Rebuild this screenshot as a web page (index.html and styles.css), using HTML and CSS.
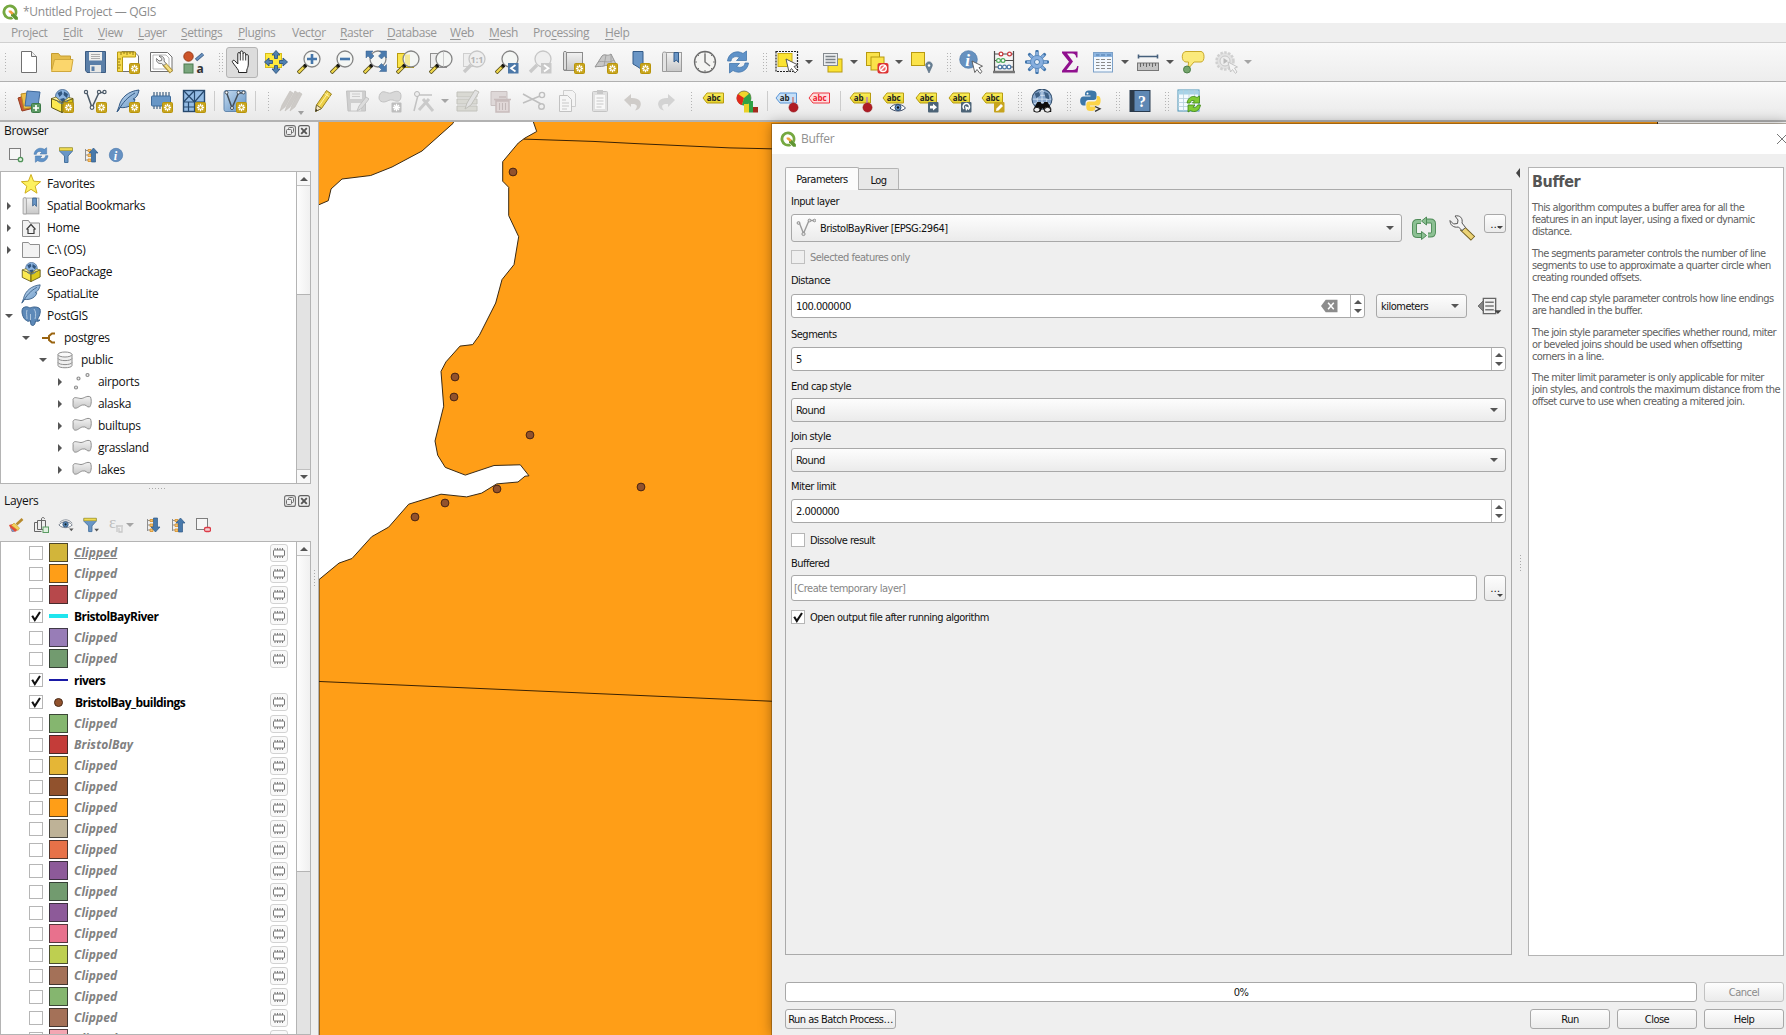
FILE: index.html
```html
<!DOCTYPE html>
<html lang="en">
<head>
<meta charset="utf-8">
<title>*Untitled Project — QGIS</title>
<link rel="stylesheet" href="styles.css">
</head>
<body>
<svg class="defs" aria-hidden="true">
<defs>
<linearGradient id="gGrey" x1="0" y1="0" x2="0" y2="1"><stop offset="0" stop-color="#f2f2f2"/><stop offset="1" stop-color="#c8c8c8"/></linearGradient>
<linearGradient id="gBlue" x1="0" y1="0" x2="1" y2="1"><stop offset="0" stop-color="#c5dbf0"/><stop offset="1" stop-color="#5f90c2"/></linearGradient>
<linearGradient id="gYel" x1="0" y1="0" x2="0" y2="1"><stop offset="0" stop-color="#fcf05c"/><stop offset="1" stop-color="#e3cf2c"/></linearGradient>

<symbol id="qgis" viewBox="0 0 16 16"><path d="M8 .5a7.5 7.5 0 1 0 3.4 14.2L9.3 12.6A4.7 4.7 0 1 1 12.4 9.8l2 2A7.5 7.5 0 0 0 8 .5z" fill="#75a840"/><path d="M9 8.8h2.6l4.3 4.4v2.5h-2.7L9 11.4z" fill="#5f9632"/><path d="M6.6 6.6h2.6l2.2 2.2v1l-1 .8h-.8L6.6 8z" fill="#f0a03c"/></symbol>

<g id="nw"><rect x="13.5" y="13.5" width="10" height="10" rx="1" fill="#c8a51e" stroke="#b8940a"/><path d="M18.5 14.8v7.4M14.9 18.5h7.2M16 16l5 5M21 16l-5 5" stroke="#fff" stroke-width="1.3"/><circle cx="18.5" cy="18.5" r="1.2" fill="#c8a51e"/></g>
<g id="nwg"><rect x="13.5" y="13.5" width="10" height="10" rx="1" fill="#bdbdbd"/><path d="M18.5 14.8v7.4M14.9 18.5h7.2M16 16l5 5M21 16l-5 5" stroke="#fff" stroke-width="1.3"/></g>

<symbol id="new" viewBox="0 0 24 24"><path d="M4.5 1.500h10l5 5v16h-15z" fill="#fff" stroke="#707070"/><path d="M14.500 1.500v5h5" fill="#eee" stroke="#707070"/></symbol>
<symbol id="open" viewBox="0 0 24 24"><path d="M1.500 19.500v-16h7l2 2.500h10v13.500z" fill="#e5bd4c" stroke="#c49c30"/><path d="M1.500 21.500l3-12h18.500l-2 12z" fill="#fbd66c" stroke="#d0a83c"/></symbol>
<symbol id="save" viewBox="0 0 24 24"><path d="M2.500 1.500h20v21H4l-1.500-2z" fill="#5b7fa8" stroke="#3c5c82"/><rect x="6" y="2" width="13" height="8.500" fill="#f0f0ee"/><path d="M8 4.500h9M8 6.500h9M8 8.500h9" stroke="#9a9a9a" stroke-width=".8"/><rect x="7" y="15" width="11" height="7.500" fill="#e8e8e6"/><rect x="8.500" y="16.500" width="3" height="4.500" fill="#5b7fa8"/></symbol>
<symbol id="layout" viewBox="0 0 24 24"><path d="M6 1.500h12l4.500 4.500v15.500H6z" fill="#fff" stroke="#707070"/><path d="M1.500 2h18v5H6.500v14.500h-5z" fill="#f5d94e" stroke="#b89a10"/><path d="M5 2v3M8 2v2M11 2v3M14 2v2M17 2v3M2 9h3M2 12h2M2 15h3M2 18h2" stroke="#8a7010" stroke-width=".9"/><use href="#nw"/></symbol>
<symbol id="layman" viewBox="0 0 24 24"><path d="M1.500 2.500h17l4.500 4.500v14.500h-21.500z" fill="#fff" stroke="#707070"/><path d="M4 5h13l3 3v11H4z" fill="none" stroke="#a9a9a9" stroke-width=".8"/><path d="M15 14l7.500 8" stroke="#ad9038" stroke-width="4.500"/><path d="M15.500 14l6.500 7.300" stroke="#f5e083" stroke-width="2.500"/><path d="M10 6l3 2.500-.5 2-2.500.5L7.500 8.500c-.5 3 1.500 5.500 5 5l2.500 2 2-2-2-2.500c1-3-1.500-5.500-5-5z" fill="#f0f0f0" stroke="#666" stroke-width=".9"/></symbol>
<symbol id="style" viewBox="0 0 24 24"><circle cx="6.500" cy="6.500" r="4.700" fill="#cc5429" stroke="#9b3a16"/><path d="M14 10l7-6" stroke="#3f6088" stroke-width="3.500"/><path d="M14.500 9.500l6.500-5.500" stroke="#6a92bf" stroke-width="1.800"/><rect x="2" y="14" width="9" height="9" fill="#7aa67d" stroke="#4b7a4f"/><text x="14.500" y="22.500" font-size="12" fill="#333">a</text></symbol>
<symbol id="hand" viewBox="0 0 24 24"><path d="M8.500 22.500v-2C7 18 4 14.500 2.500 12.200c-.8-1.300 1-2.600 2.200-1.500L7.800 14V3.800c0-1.800 2.300-1.800 2.500 0V2.200c.2-1.700 2.500-1.700 2.700 0v1.600c.3-1.600 2.500-1.500 2.700 0v1.700c.4-1.400 2.500-1.300 2.600.3V14c0 3-1 4-1.500 6v2.500z" fill="#fff" stroke="#222"/><path d="M10.300 4v6.500M13 4v6.500M15.700 5.500v5" stroke="#222" stroke-width=".9"/></symbol>
<symbol id="pan" viewBox="0 0 24 24"><rect x="1.500" y="3.500" width="16" height="14" fill="#ffe93c" stroke="#d7bd1c"/><path d="M12 .5l4 4.500h-2.500v3.500h-3V5H8zM12 23.500l4-4.500h-2.500v-3.500h-3V19H8zM.5 12L5 8v2.500h3.500v3H5V16zM23.500 12L19 8v2.500h-3.500v3H19V16z" fill="#5080b0" stroke="#30557f" stroke-width=".9"/></symbol>
<g id="lens"><path d="M9 15l-8 8" stroke="#58501c" stroke-width="3.800"/><path d="M6.500 17.500L1.500 22.500" stroke="#f0d84c" stroke-width="2.300"/><path d="M9.800 14.200l-2.300 2.300" stroke="#111" stroke-width="3.300"/><circle cx="15" cy="9" r="8" fill="#f4f6f4" stroke="#858585" stroke-width="1.300"/></g>
<g id="lensg"><path d="M9 15l-7 7" stroke="#c9c9c9" stroke-width="3.300"/><circle cx="15" cy="9" r="8" fill="#efefef" stroke="#c6c6c6" stroke-width="1.300"/></g>
<symbol id="zin" viewBox="0 0 24 24"><use href="#lens"/><path d="M15 4v10M10 9h10" stroke="#4576aa" stroke-width="2.600"/></symbol>
<symbol id="zout" viewBox="0 0 24 24"><use href="#lens"/><path d="M10 9h10" stroke="#4576aa" stroke-width="2.600"/></symbol>
<symbol id="zfull" viewBox="0 0 24 24"><use href="#lens"/><path d="M3 1h7L8 3l3 3-3 3-3-3-2 2zM23.500 1h-7l2 2-3 3 3 3 3-3 2 2zM23.500 21.500h-7l2-2-3-3 3-3 3 3 2-2z" fill="#4b7bae" stroke="#345f8d" stroke-width=".5"/></symbol>
<symbol id="zsel" viewBox="0 0 24 24"><rect x="1.500" y="3.500" width="16" height="14" fill="#fbe44a" stroke="#b99c10"/><use href="#lens"/><path d="M9 4.500h5v11.500a8 8 0 0 1-5-3.500z" fill="#f3e99a"/></symbol>
<symbol id="zlay" viewBox="0 0 24 24"><rect x="1.500" y="3.500" width="16" height="14" fill="#eee" stroke="#8f8f8f"/><use href="#lens"/><path d="M14.500 1.500v15" stroke="#ccc"/></symbol>
<symbol id="z11" viewBox="0 0 24 24"><rect x="1.500" y="3.500" width="16" height="13" fill="#eee" stroke="#cfcfcf"/><use href="#lensg"/><text x="8.500" y="12.500" font-size="9" font-weight="bold" fill="#b5b5b5">1:1</text></symbol>
<symbol id="zlast" viewBox="0 0 24 24"><use href="#lens"/><rect x="13" y="13" width="10.500" height="10.500" fill="#4c78a8"/><path d="M20.500 15l-4.500 3.200 4.500 3.300" fill="none" stroke="#fff" stroke-width="1.800"/></symbol>
<symbol id="znext" viewBox="0 0 24 24"><use href="#lensg"/><rect x="13" y="13" width="10.500" height="10.500" fill="#c9c9c9"/><path d="M16 15l4.500 3.200-4.500 3.300" fill="none" stroke="#fff" stroke-width="1.800"/></symbol>
<symbol id="mapnew" viewBox="0 0 24 24"><rect x="3.500" y="2.500" width="18" height="18" fill="url(#gGrey)" stroke="#8b8b8b"/><path d="M2.500 2.500c0-1.500 3-1.500 3 0V20h-3z" fill="#ddd" stroke="#8b8b8b"/><use href="#nw"/></symbol>
<symbol id="map3d" viewBox="0 0 24 24"><path d="M1 17L8 6c3-3 5 1 9-2l5 10c-3 3-8 0-12 2-4 1-6 0-9 1z" fill="#c7c7c7" stroke="#959595"/><path d="M4 12c5-2 10 2 16-2M12 5l-2 11M17 4l0 11" stroke="#999" fill="none" stroke-width=".8"/><use href="#nw"/></symbol>
<symbol id="bmnew" viewBox="0 0 24 24"><path d="M6 1.500h10v19l-5-3.500-5-3z" fill="#6a96c6" stroke="#335b88"/><use href="#nw"/></symbol>
<symbol id="bm" viewBox="0 0 24 24"><rect x="3.500" y="2.500" width="18" height="19" fill="url(#gGrey)" stroke="#9b9b9b"/><path d="M2.500 3.500c0-2 4-2 4 0v18h-4z" fill="#e2e2e2" stroke="#9b9b9b"/><path d="M14 2.500h4.500v10l-2.200-2.500-2.300 2z" fill="#6a96c6" stroke="#335b88"/></symbol>
<symbol id="clock" viewBox="0 0 24 24"><circle cx="12" cy="12" r="10.500" fill="#f4f4f2" stroke="#6c6c6c" stroke-width="1.300"/><path d="M12 4v8l5 4" fill="none" stroke="#777" stroke-width="1.500"/><path d="M12 2v2M12 20v2M2 12h2M20 12h2M5 5l1 1M19 5l-1 1M5 19l1-1M19 19l-1-1" stroke="#777"/></symbol>
<symbol id="refresh" viewBox="0 0 24 24"><path d="M1.500 11c1-8 9-11.500 15.500-7.500L20.500 1v9.500h-10L13.500 7.500c-4-2-8-.5-8.500 3.500z" fill="#5f92c8" stroke="#4577ac" stroke-width=".8"/><path d="M22.500 13c-1 8-9 11.500-15.500 7.500L3.500 23v-9.500h10L10.500 16.500c4 2 8 .5 8.500-3.500z" fill="#5f92c8" stroke="#4577ac" stroke-width=".8"/></symbol>
<symbol id="select" viewBox="0 0 24 24"><rect x="1" y="1.500" width="21.500" height="20" fill="none" stroke="#222" stroke-width="1.200" stroke-dasharray="2 1"/><rect x="3" y="3.500" width="14" height="13" fill="#fbe332" stroke="#c8ac14"/><path d="M11 9l3 13 2.500-3.500L20 23l2.500-2.500-3.500-4 4-1.500z" fill="#fff" stroke="#555"/></symbol>
<symbol id="selform" viewBox="0 0 24 24"><rect x="8" y="9" width="14" height="13" fill="#fbe332" stroke="#b89a10"/><rect x="3.500" y="3.500" width="14" height="12" fill="#eceef0" stroke="#868b90"/><path d="M5.500 6.500h10M5.500 9.500h10M5.500 12.500h10" stroke="#7b8288" stroke-width="1.500"/></symbol>
<symbol id="desel" viewBox="0 0 24 24"><rect x="1.500" y="2.500" width="13" height="13" fill="#fbe34a" stroke="#b89a10"/><rect x="6" y="7" width="13" height="13" fill="#fbe34a" stroke="#b89a10"/><rect x="12.500" y="13" width="11" height="10.500" rx="2" fill="#d33" /><circle cx="18" cy="18.200" r="3.300" fill="#e66" stroke="#fff" stroke-width="1.400"/><path d="M15.500 20.500l5-5" stroke="#fff" stroke-width="1.400"/></symbol>
<symbol id="selloc" viewBox="0 0 24 24"><rect x="1.500" y="2.500" width="13" height="13" fill="#fbe34a" stroke="#b89a10"/><path d="M19 23l-3-6.500a3.300 3.300 0 1 1 6 0z" fill="#6a8296" stroke="#4f6578" stroke-width=".6"/><circle cx="19" cy="15.500" r="1.200" fill="#fff"/></symbol>
<symbol id="info" viewBox="0 0 24 24"><circle cx="9.500" cy="9.500" r="8.800" fill="#6691bf" stroke="#4a78aa" stroke-width=".7"/><text class="serif" x="6.200" y="15.500" font-size="17" font-weight="bold" font-style="italic" fill="#fff">i</text><path d="M13 11l2.800 11.500 2.200-3 3 4 2-1.800-3-4 3.500-1.500z" fill="#fff" stroke="#555" stroke-width=".9"/></symbol>
<symbol id="abacus" viewBox="0 0 24 24"><path d="M2.500 1v21M21.500 1v21M2.500 4h19M2.500 10.500h19M2.500 17h19" stroke="#4d4d4d" stroke-width="1.200"/><path d="M1 22h22" stroke="#777" stroke-width="2.500"/><g fill="#fff" stroke-width="1.200"><g stroke="#c8383c"><circle cx="9" cy="4" r="1.900"/><circle cx="17.500" cy="4" r="1.900"/></g><g stroke="#4ea95a"><circle cx="6.500" cy="10.500" r="1.900"/><circle cx="11" cy="10.500" r="1.900"/></g><g stroke="#4b76a5"><circle cx="8" cy="17" r="1.900"/><circle cx="12.500" cy="17" r="1.900"/><circle cx="17" cy="17" r="1.900"/></g></g></symbol>
<symbol id="gear" viewBox="0 0 24 24"><path d="M12 1.500v21M1.500 12h21M4.600 4.600l14.800 14.800M19.400 4.600L4.600 19.400" stroke="#4276ac" stroke-width="3.400" stroke-linecap="round"/><path d="M12 2v20M2 12h20M5 5l14 14M19 5L5 19" stroke="#86aede" stroke-width="2.200"/><circle cx="12" cy="12" r="6.500" fill="#86aede" stroke="#5a8bc0"/><circle cx="12" cy="12" r="2.500" fill="#e8f0f8" stroke="#4a7db3"/></symbol>
<symbol id="sigma" viewBox="0 0 24 24"><path d="M4 1.500h15.500v6h-1.300c-.5-3-1.500-4-4.200-4H9l6 8-6.500 8.500h6c2.700 0 4-1 4.800-4h1.200l-1 6.500H4v-1.800l7-9-7-8.700z" fill="#90108e"/></symbol>
<symbol id="table" viewBox="0 0 24 24"><rect x="2.500" y="2.500" width="19" height="19.500" fill="#f2f8fe" stroke="#7ba0c8"/><rect x="3" y="3" width="18" height="4" fill="#8db5e0"/><path d="M5 9.500h3.500M10 9.500h4M16 9.500h4M5 12.500h3.500M10 12.500h4M16 12.500h4M5 15.500h3.500M10 15.500h4M16 15.500h4M5 18.500h3.500M10 18.500h4M16 18.500h4" stroke="#8a8a8a" stroke-width="1.200"/><path d="M5 5h3.500M10 5h4M16 5h4" stroke="#4a78aa"/></symbol>
<symbol id="measure" viewBox="0 0 24 24"><path d="M2.500 6.500h19M2.500 4.500v4M21.500 4.500v4" stroke="#46607c" stroke-width="1.600"/><rect x="1.500" y="13" width="21" height="7.500" fill="#c4c4c4" stroke="#777"/><path d="M4.500 13v4M7.500 13v3M10.500 13v4M13.500 13v3M16.500 13v4M19.500 13v3" stroke="#666"/></symbol>
<symbol id="tips" viewBox="0 0 24 24"><path d="M5 1.500h15c4 0 4 10.500 0 10.500h-7l-6 7 .5-7H5c-5 0-5-10.500 0-10.500z" fill="#fbea7c" stroke="#c8a92a"/><circle cx="6" cy="19.500" r="3.500" fill="#75a56c" stroke="#4b7d46"/></symbol>
<symbol id="run" viewBox="0 0 24 24"><circle cx="11" cy="11" r="8.500" fill="#e2e2e2" stroke="#d0d0d0" stroke-width="2.500" stroke-dasharray="2.500 1.400"/><circle cx="11" cy="11" r="5" fill="#eee" stroke="#c8c8c8"/><path d="M9.500 8l4.500 3-4.500 3z" fill="#bbb"/><path d="M14 12l2.500 10 2-2.500 3 4 1.500-1.500-2.500-4 3-1z" fill="#f4f4f4" stroke="#c4c4c4"/></symbol>

<symbol id="srcman" viewBox="0 0 24 24"><path d="M1 9l12-4 4 14L5 22z" fill="#c95a38" stroke="#963c1e"/><path d="M4 5l12-2 2 15-11 2z" fill="#eec04a" stroke="#b88a20"/><path d="M10 2l13 1-2 14H8z" fill="#6c98cc" stroke="#3f6a9c"/><rect x="14.500" y="14.500" width="9" height="9" rx="1" fill="#5c9a64" stroke="#3c7a46"/><path d="M19 16v6M16 19h6" stroke="#fff" stroke-width="1.700"/></symbol>
<g id="boxg"><path d="M1.500 9.500L12 13.500v10l-10.500-5z" fill="#fce94f" stroke="#5a5210"/><path d="M12 13.500l11-4V18l-11 5.500z" fill="#dcc71c" stroke="#5a5210"/><circle cx="12.500" cy="7.500" r="7" fill="#8bb3e0" stroke="#3a5f8c" stroke-width=".8"/><path d="M7.500 4l4-2 1 3-3 3zM14 2.500l4 2.500-1 4-3.500-3zM10 10l4-1 2 3-3 2z" fill="#31567f"/><path d="M1.500 9.500L6 8l6 5.500 6.500-5 4.500 1-11 4z" fill="#fff3a0" stroke="#5a5210" stroke-width=".7"/></g>
<symbol id="gpknew" viewBox="0 0 24 24"><use href="#boxg"/><use href="#nw"/></symbol>
<symbol id="gpk" viewBox="0 0 24 24"><use href="#boxg"/></symbol>
<symbol id="shpnew" viewBox="0 0 24 24"><path d="M3.500 3L9 18.500l7-15h5.500" fill="none" stroke="#4c5a68" stroke-width="1.500"/><g fill="#fff" stroke="#4c5a68" stroke-width="1.200"><circle cx="3" cy="3" r="1.600"/><circle cx="9" cy="18.500" r="1.800"/><circle cx="16" cy="3" r="1.600"/><circle cx="21.500" cy="3" r="1.600"/></g><use href="#nw"/></symbol>
<g id="feath"><path d="M23 1C13 2 5 8 3 17.500L1 23l3-4.500c8 1 14-3 15-8-1 0-1.500 0-2-.5 3-1 5-3.500 6-9z" fill="url(#gBlue)" stroke="#355b86"/><path d="M2 22C7 13 12 8 19 4" fill="none" stroke="#355b86"/></g>
<symbol id="splnew" viewBox="0 0 24 24"><use href="#feath"/><use href="#nw"/></symbol>
<symbol id="spl" viewBox="0 0 24 24"><use href="#feath"/></symbol>
<symbol id="memnew" viewBox="0 0 24 24"><path d="M5 3v17M8 3v17M11 3v17M14 3v17M17 3v17M20 3v17" stroke="#3e5f80" stroke-width="1.200"/><rect x="2.500" y="7" width="19" height="10" rx="1" fill="#6796c6" stroke="#3d6a9a"/><use href="#nw"/></symbol>
<symbol id="vrtnew" viewBox="0 0 24 24"><rect x="1.500" y="1.500" width="21" height="21" fill="#94bce4" stroke="#27496d" stroke-width="1.400"/><path d="M1.500 13h21M12.500 1.500v21M1.500 1.500l11 11.500M12.500 1.500L1.500 13M12.500 13l10-11.500M6.500 13v9.500M1.500 18h11" stroke="#27496d" stroke-width="1.200"/><use href="#nw"/></symbol>
<symbol id="vlay" viewBox="0 0 24 24"><rect x="1" y="1.500" width="22" height="21" rx="2" fill="url(#gBlue)" stroke="#6488ae"/><path d="M3.500 3.500L9 19l6.500-15h5" fill="none" stroke="#444f5a" stroke-width="1.500"/><g fill="#fff" stroke="#444f5a"><circle cx="3.500" cy="3.500" r="1.500"/><circle cx="9" cy="19" r="1.500"/><circle cx="15.500" cy="3.500" r="1.500"/><circle cx="20.500" cy="3.500" r="1.500"/></g><use href="#nw"/></symbol>
<symbol id="pens" viewBox="0 0 24 24"><path d="M1 22l2-6L11 2l3 2-8 14zM6 22l2-6 8-14 3 2-8 14zM11 22l2-6 7-13 3 2-7 13z" fill="#cdcac7" stroke="#c2bfbb" stroke-width=".6"/></symbol>
<symbol id="pencil" viewBox="0 0 24 24"><path d="M3.500 22.500l1-6.500L14.500 1.500l5 3.500-10 14.500z" fill="#eccf48" stroke="#9c8420"/><path d="M12.500 4.300l5 3.500M7 17L16 4" stroke="#fff3a4"/><path d="M3.500 22.500l1-6.500 5 3.500z" fill="#f6e6c0" stroke="#756a3a"/><path d="M3.500 22.500l.5-2.500 1.700 1.200z" fill="#222"/></symbol>
<symbol id="saveg" viewBox="0 0 24 24"><path d="M1.500 2h19v20H3z" fill="#cfcfcf" stroke="#c2c2c2"/><path d="M5 3h12v7H5zM6 14h10v7.500H6z" fill="#eee"/><path d="M7 5h8M7 7.500h8" stroke="#ccc"/><path d="M12 22l2-5 7-9 3 2-7 9z" fill="#dcdcdc" stroke="#c2c2c2"/></symbol>
<symbol id="addg" viewBox="0 0 24 24"><path d="M2 5c3-5 7 0 11-1 6-3 10-2 10 3 0 6-4 6-8 4-4-1-6 2-9 2-5 0-6-4-4-8z" fill="#d8d8d8" stroke="#c2c2c2"/><use href="#nwg"/></symbol>
<symbol id="vertg" viewBox="0 0 24 24"><path d="M3 22l4-16 14 0" fill="none" stroke="#c2c2c2" stroke-width="1.500"/><circle cx="6" cy="5" r="2.500" fill="#eee" stroke="#b9b9b9"/><path d="M8 21L18 10M12 10l10 12" stroke="#cacaca" stroke-width="3"/></symbol>
<symbol id="multg" viewBox="0 0 24 24"><path d="M1 3h20v5H1zM1 10h20v5H1zM1 17h20v5H1z" fill="#d9d9d3" stroke="#c2c2bc"/><path d="M9 20l2-6L19 1l4 2-8 13z" fill="#e2e2e2" stroke="#c0c0ba"/></symbol>
<symbol id="delg" viewBox="0 0 24 24"><path d="M2 2.500h16v14H2z" fill="#ded8d8" stroke="#c8c0c0"/><path d="M5 10.500h17M10 8h7M7 12h13v11H7z" fill="#e0d7d7" stroke="#c8bcbc" stroke-width="1.500"/><path d="M10.500 14v7M13.500 14v7M16.500 14v7" stroke="#c2b8b8"/></symbol>
<symbol id="cutg" viewBox="0 0 24 24"><path d="M1 5l18 10M1 14l17-7" stroke="#bfbfbf" stroke-width="1.500"/><circle cx="20" cy="6" r="2.600" fill="none" stroke="#bfbfbf" stroke-width="1.400"/><circle cx="19.500" cy="17.500" r="2.800" fill="none" stroke="#bfbfbf" stroke-width="1.400"/></symbol>
<symbol id="copyg" viewBox="0 0 24 24"><path d="M8.500 1.500h9l3 3v13h-12z" fill="#f4f4f4" stroke="#cecece"/><path d="M4.500 6.500h8l4 4v12h-12z" fill="#f6f6f6" stroke="#c2c2c2"/><path d="M7 11h4M7 14h7M7 17h7M7 20h5" stroke="#c8c8c8"/></symbol>
<symbol id="pasteg" viewBox="0 0 24 24"><rect x="4.500" y="2.500" width="15" height="20" rx="1" fill="#e0e0e0" stroke="#c4c4c4"/><rect x="7" y="6" width="10" height="14" fill="#f8f8f8"/><path d="M9 1h6v4H9z" fill="#c8c8c8"/><path d="M8.500 9h7M8.500 12h7M8.500 15h7M8.500 18h5" stroke="#c8c8c8"/></symbol>
<symbol id="undog" viewBox="0 0 24 24"><path d="M3 11l7-6v4c8-.5 11 4 9.500 8-1 3-3 4-5.500 4.500 3.500-4.500 2-7-4-6.500V18z" fill="#cfccc9"/></symbol>
<symbol id="redog" viewBox="0 0 24 24"><path d="M21 11l-7-6v4c-8-.5-11 4-9.500 8 1 3 3 4 5.500 4.500-3.500-4.500-2-7 4-6.500V18z" fill="#d3d3d3"/></symbol>
<g id="tag"><path d="M1 9l4-5h16.500v10H5z" fill="url(#gYel)" stroke="#b89c10"/><text class="tagtx" x="4.800" y="11.800" fill="#222">abc</text></g>
<symbol id="lab" viewBox="0 0 24 24"><use href="#tag"/></symbol>
<symbol id="pie" viewBox="0 0 24 24"><circle cx="9" cy="9" r="7" fill="#f0d52c" stroke="#222" stroke-width=".5"/><path d="M9 9L3 5a7 7 0 0 0 4 11z" fill="#e02a1c"/><path d="M9 9L7 16a7 7 0 0 0 9-6l-1-6z" fill="#2fa246"/><path d="M9 15h5v8.500H9z" fill="#ead227"/><path d="M14 12h4v11.500h-4z" fill="#2fa246"/><path d="M18 18h5v5.500h-5z" fill="#a42a1c"/></symbol>
<g id="pin"><path d="M18 8v9" stroke="#8c3038" stroke-width="2"/><path d="M18 8v7" stroke="#fff" stroke-width="1"/><circle cx="18.500" cy="18.500" r="4.600" fill="#b01c24" stroke="#8a1218" stroke-width=".5"/></g>
<symbol id="labpinb" viewBox="0 0 24 24"><path d="M1 9l4-5h16.500v10H5z" fill="#c5dff8" stroke="#5b96d6"/><text class="tagtx" x="4.800" y="11.800" fill="#222">ab</text><use href="#pin"/></symbol>
<symbol id="labred" viewBox="0 0 24 24"><path d="M1 9l4-5h16.500v10H5z" fill="#fddede" stroke="#ee3540"/><text class="tagtx" x="4.800" y="11.800" fill="#ee2030">abc</text></symbol>
<symbol id="labpin" viewBox="0 0 24 24"><path d="M1 9l4-5h16.500v10H5z" fill="url(#gYel)" stroke="#b89c10"/><text class="tagtx" x="4.800" y="11.800" fill="#222">ab</text><use href="#pin"/></symbol>
<symbol id="labeye" viewBox="0 0 24 24"><use href="#tag"/><path d="M8 19c4-5 11-5 15.500 0-4 4-11 4-15.500 0z" fill="#fff" stroke="#3d4c66"/><circle cx="16" cy="18.500" r="3" fill="#6c98cc" stroke="#284a74"/><circle cx="16" cy="18.500" r="1.200" fill="#111"/></symbol>
<symbol id="labmove" viewBox="0 0 24 24"><use href="#tag"/><rect x="13" y="13" width="10.500" height="10.500" rx="1" fill="#4d6478"/><path d="M15 16.800h3v-2l4 3.400-4 3.400v-2h-3z" fill="#fff"/></symbol>
<symbol id="labrot" viewBox="0 0 24 24"><use href="#tag"/><rect x="13" y="13" width="10.500" height="10.500" rx="1" fill="#4d6478"/><path d="M16 20a3.200 3.200 0 1 1 4 .5" fill="none" stroke="#fff" stroke-width="1.500"/><path d="M17 17l4 1.500-3 3.500z" fill="#fff"/></symbol>
<symbol id="labedit" viewBox="0 0 24 24"><use href="#tag"/><rect x="13" y="13" width="10.500" height="10.500" rx="1" fill="#c8a51e"/><path d="M15 22l.5-2.500 4.500-4.500 2 2-4.500 4.500z" fill="#fff"/></symbol>
<symbol id="globe" viewBox="0 0 26 26"><circle cx="13" cy="11" r="10.800" fill="#86a6cc" stroke="#33506f" stroke-width="1.200"/><path d="M3 11h20M13 1v20M5 5.500c5 2 11 2 16 0M4 16c5-2 13-2 18 0M13 1C6 6 6 16 13 21M13 1c7 5 7 15 0 20" fill="none" stroke="#e0ebf5" stroke-width=".8"/><path d="M5 5l5-2 1 4-4 3zM15 3l5 2 1 6-4-1z" fill="#3d5f84"/><path d="M8 14h3.500l1 2h2l1-2H19l4 7v4h-7l-2-4h-1l-2 4H4v-4z" fill="#0c0c0c"/><ellipse cx="7.500" cy="22.500" rx="3.300" ry="2.600" fill="#eee" stroke="#111"/><ellipse cx="19" cy="22.500" rx="3.300" ry="2.600" fill="#eee" stroke="#111"/></symbol>
<symbol id="py" viewBox="0 0 24 24"><path d="M11 1.500c-5 0-5 2-5 5h5.500v1H4C0 7.500.500 16.500 4 16.500h2.500c0-4 0-5.500 4-5.500h4c2 0 3-1 3-3V5c0-2.500-2-3.500-6.500-3.500z" fill="#3d77a8"/><circle cx="8.500" cy="4.500" r="1" fill="#fff"/><path d="M11.500 22c5 0 5-2 5-4.500H11v-1h8.500c3-1 3-9.500-.5-9.500h-1.200c0 4 0 5.500-3.500 5.500h-4c-2 0-3 1-3 3v3c0 2.500 1.500 3.500 4.200 3.500z" fill="#fcd447"/><path d="M16 17.500l5 2.300-5 2.500" fill="none" stroke="#333" stroke-width="1.300"/></symbol>
<symbol id="help" viewBox="0 0 24 24"><rect x="2" y="1.500" width="20" height="21" fill="#5f88b4" stroke="#2a3c50"/><rect x="2" y="1.500" width="4.500" height="21" fill="#2e3b48"/><text class="serif" x="10" y="18" font-size="16" fill="#fff">?</text></symbol>
<symbol id="tabref" viewBox="0 0 24 24"><rect x="1" y="1" width="21" height="21" fill="#f4faff" stroke="#4a94b8"/><rect x="1.500" y="1.500" width="20" height="4" fill="#a8d3e8"/><path d="M1 9.500h21M1 13.500h21M1 17.500h21M6.500 1v21M12 1v21M17.500 1v21" stroke="#b5cfdc" stroke-width=".8"/><path d="M10 14c1-6 6-8 10-5.500l2.500-1.500v7h-7l2-2.200c-2-1-4 0-4.500 2.200z" fill="#80cc34" stroke="#3f8614" stroke-width=".8"/><path d="M23.500 16c-1 6-6 8-10 5.500l-2.500 1.500v-7h7l-2 2.200c2 1 4 0 4.500-2.200z" fill="#80cc34" stroke="#3f8614" stroke-width=".8"/></symbol>

<symbol id="float" viewBox="0 0 12 12"><rect x=".600" y=".600" width="10.800" height="10.800" rx="2" fill="none" stroke="#707070" stroke-width="1.100"/><rect x="4.500" y="2.500" width="5" height="5" rx="1" fill="none" stroke="#707070"/><rect x="2.500" y="4.500" width="5" height="5" rx="1" fill="#efefef" stroke="#707070"/></symbol>
<symbol id="close" viewBox="0 0 12 12"><rect x=".600" y=".600" width="10.800" height="10.800" rx="2" fill="none" stroke="#606060" stroke-width="1.100"/><path d="M3.200 3.200l5.600 5.600M8.800 3.200L3.200 8.800" stroke="#555" stroke-width="1.900"/></symbol>
<symbol id="addlay" viewBox="0 0 16 16"><rect x="1.500" y="1.500" width="11" height="11" fill="#f6f6f6" stroke="#7e7e7e"/><circle cx="12.500" cy="12.500" r="2.200" fill="#dff0df" stroke="#4f9358" stroke-width="1.300"/></symbol>
<symbol id="funnel" viewBox="0 0 16 16"><path d="M1.500 1h13v3L10 9v6.500H6.500V9l-5-5z" fill="#6996c6" stroke="#46729f"/><rect x="1.500" y=".800" width="13" height="2.700" fill="#eedb54" stroke="#b7a020" stroke-width=".7"/></symbol>
<g id="treeg"><path d="M2.500 2v12M2.500 3.500H7M2.500 8h4M2.500 13h4" stroke="#8f8f8f" fill="none"/><path d="M5 2.500h3v2H5zM5 7h3v2.500H5zM5 12h3v2.500H5z" fill="#f6c477" stroke="#d78f24" stroke-width=".8"/></g>
<symbol id="collapse" viewBox="0 0 16 16"><use href="#treeg"/><path d="M10.500 1l4.500 5h-2.500v9h-4V6H6z" fill="#4879ab" stroke="#2f5a86" stroke-width=".7"/></symbol>
<symbol id="expand" viewBox="0 0 16 16"><use href="#treeg"/><path d="M10.500 15l4.500-5h-2.500V1h-4v9H6z" fill="#4879ab" stroke="#2f5a86" stroke-width=".7"/></symbol>
<symbol id="infos" viewBox="0 0 16 16"><circle cx="8" cy="8" r="6.700" fill="#6691c2" stroke="#4f7db0" stroke-width=".7"/><text class="serif" x="5.800" y="12.500" font-size="12.500" font-weight="bold" font-style="italic" fill="#fff">i</text></symbol>
<symbol id="brush" viewBox="0 0 16 16"><path d="M8.500 7.500L14.500 2" stroke="#b78a2c" stroke-width="2.600"/><path d="M1 8l4-1 5 5-2 2.500-4 .5z" fill="#e34b38"/><path d="M3.500 8.500L6 6l5.500 5L10 13.500z" fill="#f2d05a" stroke="#c59c28" stroke-width=".6"/><path d="M2 10l5 5-3-.5z" fill="#6aa0d8"/></symbol>
<symbol id="addgrp" viewBox="0 0 16 16"><path d="M4 5.500H1.500v9h7" fill="none" stroke="#666"/><path d="M4.500 3.500h8v9h-8z" fill="#eee" stroke="#666"/><path d="M8.500 12V2c0-2 3-2 3 0" stroke="#666" fill="none"/><rect x="10" y="10" width="5.500" height="5.500" fill="#dff0df" stroke="#5b9c63"/></symbol>
<symbol id="eye" viewBox="0 0 18 16"><path d="M1 8C4 3.500 12 3 16 8c-4 4-11 4-15 0z" fill="#fff" stroke="#6c7684"/><circle cx="8.500" cy="7.300" r="3" fill="#5c8cc0" stroke="#34567c"/><circle cx="8.500" cy="7.300" r="1.200" fill="#122"/><path d="M2 5c4-4 10-4 14 1" fill="none" stroke="#8a929c"/><path d="M12.500 12h5L15 15z" fill="#555"/></symbol>
<symbol id="funneld" viewBox="0 0 17 16"><path d="M1 1h13v3L9.500 9v6H6V9L1 4z" fill="#6996c6" stroke="#46729f"/><rect x="1" y=".800" width="13" height="2.700" fill="#eedb54" stroke="#b7a020" stroke-width=".7"/><path d="M12 12h5l-2.500 3z" fill="#555"/></symbol>
<symbol id="expr" viewBox="0 0 16 16"><text class="serif" x="1" y="10.500" font-size="17" fill="#bdbdbd">ε</text><path d="M8 9h7M9 9v6M11 11v4h3v-5" stroke="#c8c8c8" fill="none" stroke-width="1.300"/></symbol>
<symbol id="remlay" viewBox="0 0 16 16"><rect x="1.500" y="1.500" width="11" height="11" fill="#f6f6f6" stroke="#7e7e7e"/><rect x="9.500" y="10.500" width="6" height="4" rx="1.500" fill="#f6cdd0" stroke="#dc3c48" stroke-width="1.300"/></symbol>

<symbol id="star" viewBox="0 0 20 20"><path d="M10 .5l2.600 6.700 7 .5-5.400 4.500 1.800 7L10 15.300l-6 3.900 1.800-7L.400 7.700l7-.5z" fill="#fdf15e" stroke="#cfae1e"/></symbol>
<symbol id="home" viewBox="0 0 20 20"><path d="M1.500 18.500v-16h6l1.500 2.500h9.500v13.500z" fill="#f2f2f2" stroke="#8f8f8f"/><path d="M5.500 11.500l4.500-5 4.500 5M7 11v4.500h6V11" fill="none" stroke="#3c3c3c" stroke-width="1.200"/></symbol>
<symbol id="folder" viewBox="0 0 20 20"><path d="M1.500 17.500v-15h6l1.500 2h9.500v13z" fill="#f2f2f2" stroke="#8f8f8f"/></symbol>
<symbol id="pg" viewBox="0 0 20 20"><path d="M2 2c3-2 5-1 7 0 3-1.500 8-1.500 10 1 1 4-1 8-3 11h3c-1 1.500-3 1.500-4.500 1-.5 3-1 4.500-3 4.500-2 0-2-3-2-5-2 1-3 1-4 0C2 13-.500 5 2 2z" fill="#5d89b8" stroke="#3d6590"/><path d="M6 4c-1 3 0 6 0 9M13 3c2 2 2 7 1 10M9.500 8v6" stroke="#c5d8ea" fill="none" stroke-width=".8"/></symbol>
<symbol id="conn" viewBox="0 0 16 16"><path d="M1 8h7M14 3.500h-3L8 6v4l3 2.500h3" fill="none" stroke="#9a6410" stroke-width="2"/></symbol>
<symbol id="db" viewBox="0 0 18 18"><path d="M2 3.500v11c0 3 14 3 14 0v-11" fill="#efefef" stroke="#8d8d8d"/><ellipse cx="9" cy="3.500" rx="7" ry="2.500" fill="#fafafa" stroke="#8d8d8d"/><path d="M2 7.500c1 2.800 13 2.800 14 0M2 11.500c1 2.800 13 2.800 14 0" fill="none" stroke="#8d8d8d"/></symbol>
<symbol id="pts" viewBox="0 0 20 20"><g fill="#eee" stroke="#8d8d8d" stroke-width="1.200"><circle cx="4" cy="15.500" r="1.500"/><circle cx="6.500" cy="6.500" r="1.500"/><circle cx="15.500" cy="3" r="1.500"/></g></symbol>
<symbol id="poly" viewBox="0 0 20 20"><path d="M1 5.500C2 2 6 4.500 9 4.500s6-3.500 9.500-1.500C20 7 19 12 17.500 13c-3 .5-3-3-7-2-3 .5-5 4-8 3C0 12.500 1.500 9 1 5.500z" fill="url(#gGrey)" stroke="#8d8d8d"/></symbol>
<symbol id="mem" viewBox="0 0 18 18"><rect x=".5" y=".5" width="17" height="17" rx="2.500" fill="#f9f9f9" stroke="#d2d2d2"/><path d="M5 4v10M7.500 4v10M10 4v10M12.500 4v10" stroke="#787878"/><rect x="3.500" y="6" width="11" height="6" rx="1" fill="#fff" stroke="#787878"/></symbol>
<symbol id="check" viewBox="0 0 14 14"><path d="M3.200 6.800L5.800 11 11 3" fill="none" stroke="#111" stroke-width="2.100"/></symbol>
<symbol id="line" viewBox="0 0 20 20"><path d="M3 4l4.500 11.500L13 2.500h5" fill="none" stroke="#9b9b9b" stroke-width="1.400"/><g fill="#ddd" stroke="#8a8a8a" stroke-width=".9"><circle cx="2.500" cy="5" r="1.400"/><circle cx="7.500" cy="16" r="1.600"/><circle cx="13.500" cy="2.500" r="1.400"/><circle cx="18.500" cy="2.500" r="1.300"/></g></symbol>
<symbol id="iter" viewBox="0 0 26 24"><g fill="none"><path d="M10 19.500H6.500q-3 0-3-3v-8q0-3 3-3H10M15 5h4.500q3 0 3 3v8q0 3-3 3H17" stroke="#4f8c58" stroke-width="5"/><path d="M10 19.500H6.500q-3 0-3-3v-8q0-3 3-3H10M15 5h4.500q3 0 3 3v8q0 3-3 3H17" stroke="#8cc093" stroke-width="3.200"/></g><path d="M15.500 1v8L10.500 5zM10.500 15.500v8l5-4z" fill="#8cc093" stroke="#4f8c58"/></symbol>
<symbol id="wrench" viewBox="0 0 26 26"><path d="M13 13l11 10.500" stroke="#6e5c20" stroke-width="6"/><path d="M14.500 14.500l9 8.500" stroke="#ecd375" stroke-width="4.300"/><path d="M6 1c5-1 8 2 7 7l3.500 4.500-3.500 3L9.500 12C4.500 13 1 10 1 5.500L4.500 9l4-.5.500-3.500z" fill="#f3f3f3" stroke="#555"/></symbol>
<symbol id="datadef" viewBox="0 0 26 20"><path d="M1 9.500L7 3.500v12z" fill="#888" stroke="#666"/><path d="M6.500 1.500h13v16h-13z" fill="#f0f0f0" stroke="#666" stroke-width="1.400"/><path d="M8.500 5.500h9M8.500 9.500h9M8.500 13.500h9" stroke="#777" stroke-width="1.600"/><path d="M18 14h7.500l-3.700 4z" fill="#444"/></symbol>
<symbol id="clear" viewBox="0 0 18 14"><path d="M0 7l5-6.500h12.500v13H5z" fill="#8c8c8c"/><path d="M7.500 3.500l6 7M13.500 3.500l-6 7" stroke="#fff" stroke-width="1.600"/></symbol>
</defs>
</svg>

<div class="app">
<header class="titlebar"><svg class="logo"><use href="#qgis"/></svg><span>*Untitled Project — QGIS</span></header>
<nav class="menubar"><span>Pro<u>j</u>ect</span><span><u>E</u>dit</span><span><u>V</u>iew</span><span><u>L</u>ayer</span><span><u>S</u>ettings</span><span><u>P</u>lugins</span><span>Vect<u>o</u>r</span><span><u>R</u>aster</span><span><u>D</u>atabase</span><span><u>W</u>eb</span><span><u>M</u>esh</span><span>Pro<u>c</u>essing</span><span><u>H</u>elp</span></nav>
<div class="toolbar">
<i class="grip first"></i>
<b><svg><use href="#new"/></svg></b><b><svg><use href="#open"/></svg></b><b><svg><use href="#save"/></svg></b><b><svg><use href="#layout"/></svg></b><b><svg><use href="#layman"/></svg></b><b><svg><use href="#style"/></svg></b>
<i class="grip"></i>
<b class="on"><svg><use href="#hand"/></svg></b><b><svg><use href="#pan"/></svg></b><b><svg><use href="#zin"/></svg></b><b><svg><use href="#zout"/></svg></b><b><svg><use href="#zfull"/></svg></b><b><svg><use href="#zsel"/></svg></b><b><svg><use href="#zlay"/></svg></b><b><svg><use href="#z11"/></svg></b><b><svg><use href="#zlast"/></svg></b><b><svg><use href="#znext"/></svg></b><b><svg><use href="#mapnew"/></svg></b><b><svg><use href="#map3d"/></svg></b><b><svg><use href="#bmnew"/></svg></b><b><svg><use href="#bm"/></svg></b><b><svg><use href="#clock"/></svg></b><b><svg><use href="#refresh"/></svg></b>
<i class="grip"></i>
<b><svg><use href="#select"/></svg></b><i class="drop"></i><b><svg><use href="#selform"/></svg></b><i class="drop"></i><b><svg><use href="#desel"/></svg></b><i class="drop"></i><b><svg><use href="#selloc"/></svg></b>
<i class="grip"></i>
<b><svg><use href="#info"/></svg></b><b><svg><use href="#abacus"/></svg></b><b><svg><use href="#gear"/></svg></b><b><svg><use href="#sigma"/></svg></b><b><svg><use href="#table"/></svg></b><i class="drop"></i><b><svg><use href="#measure"/></svg></b><i class="drop"></i><b><svg><use href="#tips"/></svg></b><b><svg><use href="#run"/></svg></b><i class="drop dim"></i>
</div>
<div class="toolbar second">
<i class="grip first"></i>
<b><svg><use href="#srcman"/></svg></b><b><svg><use href="#gpknew"/></svg></b><b><svg><use href="#shpnew"/></svg></b><b><svg><use href="#splnew"/></svg></b><b><svg><use href="#memnew"/></svg></b><b><svg><use href="#vrtnew"/></svg></b>
<i class="sep"></i><b><svg><use href="#vlay"/></svg></b><i class="sep"></i><i class="grip tight"></i>
<b class="corner"><svg><use href="#pens"/></svg></b><b><svg><use href="#pencil"/></svg></b><b><svg><use href="#saveg"/></svg></b><b><svg><use href="#addg"/></svg></b><b><svg><use href="#vertg"/></svg></b><i class="drop dim"></i><b><svg><use href="#multg"/></svg></b><b><svg><use href="#delg"/></svg></b><b><svg><use href="#cutg"/></svg></b><b><svg><use href="#copyg"/></svg></b><b><svg><use href="#pasteg"/></svg></b><b><svg><use href="#undog"/></svg></b><b><svg><use href="#redog"/></svg></b>
<i class="grip tight"></i>
<b><svg><use href="#lab"/></svg></b><b><svg><use href="#pie"/></svg></b><i class="sep slim"></i><b><svg><use href="#labpinb"/></svg></b><b><svg><use href="#labred"/></svg></b><i class="sep"></i><b><svg><use href="#labpin"/></svg></b><b><svg><use href="#labeye"/></svg></b><b><svg><use href="#labmove"/></svg></b><b><svg><use href="#labrot"/></svg></b><b><svg><use href="#labedit"/></svg></b>
<i class="grip"></i><b><svg><use href="#globe"/></svg></b><i class="grip"></i><b><svg><use href="#py"/></svg></b><i class="grip"></i><b><svg><use href="#help"/></svg></b><i class="grip"></i><b><svg><use href="#tabref"/></svg></b>
</div>

<main class="work">
<aside class="docks">
<section class="dock browser">
<h2 class="dockhead"><span>Browser</span><svg><use href="#float"/></svg><svg><use href="#close"/></svg></h2>
<div class="docktools"><svg><use href="#addlay"/></svg><svg><use href="#refresh"/></svg><svg><use href="#funnel"/></svg><svg><use href="#collapse"/></svg><svg><use href="#infos"/></svg></div>
<div class="box">
<ul class="tree">
<li><i></i><svg><use href="#star"/></svg>Favorites</li>
<li><i class="shut"></i><svg><use href="#bm"/></svg>Spatial Bookmarks</li>
<li><i class="shut"></i><svg><use href="#home"/></svg>Home</li>
<li><i class="shut"></i><svg><use href="#folder"/></svg>C:\ (OS)</li>
<li><i></i><svg><use href="#gpk"/></svg>GeoPackage</li>
<li><i></i><svg><use href="#spl"/></svg>SpatiaLite</li>
<li><i class="openn"></i><svg><use href="#pg"/></svg>PostGIS</li>
<li class="d1"><i class="openn"></i><svg class="small"><use href="#conn"/></svg>postgres</li>
<li class="d2"><i class="openn"></i><svg class="mid"><use href="#db"/></svg>public</li>
<li class="d3"><i class="shut"></i><svg><use href="#pts"/></svg>airports</li>
<li class="d3"><i class="shut"></i><svg><use href="#poly"/></svg>alaska</li>
<li class="d3"><i class="shut"></i><svg><use href="#poly"/></svg>builtups</li>
<li class="d3"><i class="shut"></i><svg><use href="#poly"/></svg>grassland</li>
<li class="d3"><i class="shut"></i><svg><use href="#poly"/></svg>lakes</li>
</ul>
<div class="scroll"><i class="up"></i><i class="thumb"></i><i class="track"></i><i class="down"></i></div>
</div>
</section>
<div class="hsplit"><i></i></div>
<section class="dock layers">
<h2 class="dockhead"><span>Layers</span><svg><use href="#float"/></svg><svg><use href="#close"/></svg></h2>
<div class="docktools"><svg><use href="#brush"/></svg><svg><use href="#addgrp"/></svg><svg><use href="#eye"/></svg><svg><use href="#funneld"/></svg><svg class="ex"><use href="#expr"/></svg><i class="drop dim"></i><svg><use href="#expand"/></svg><svg><use href="#collapse"/></svg><svg><use href="#remlay"/></svg></div>
<div class="box">
<ul class="list">
<li><em></em><i class="sw" style="background:#d2b53a"></i><span><u>Clipped</u></span><svg><use href="#mem"/></svg></li>
<li><em></em><i class="sw" style="background:#ff9e17"></i><span>Clipped</span><svg><use href="#mem"/></svg></li>
<li><em></em><i class="sw" style="background:#b7484b"></i><span>Clipped</span><svg><use href="#mem"/></svg></li>
<li class="vis"><em><svg><use href="#check"/></svg></em><i class="ln" style="background:#1fe5ee"></i><span>BristolBayRiver</span><svg><use href="#mem"/></svg></li>
<li><em></em><i class="sw" style="background:#987db7"></i><span>Clipped</span><svg><use href="#mem"/></svg></li>
<li><em></em><i class="sw" style="background:#729b6f"></i><span>Clipped</span><svg><use href="#mem"/></svg></li>
<li class="vis"><em><svg><use href="#check"/></svg></em><i class="ln thin" style="background:#1a1aa6"></i><span>rivers</span></li>
<li class="vis"><em><svg><use href="#check"/></svg></em><i class="pt"></i><span>BristolBay_buildings</span><svg><use href="#mem"/></svg></li>
<li><em></em><i class="sw" style="background:#85b66f"></i><span>Clipped</span><svg><use href="#mem"/></svg></li>
<li><em></em><i class="sw" style="background:#c43c39"></i><span>BristolBay</span><svg><use href="#mem"/></svg></li>
<li><em></em><i class="sw" style="background:#e5b636"></i><span>Clipped</span><svg><use href="#mem"/></svg></li>
<li><em></em><i class="sw" style="background:#91522d"></i><span>Clipped</span><svg><use href="#mem"/></svg></li>
<li><em></em><i class="sw" style="background:#ff9e17"></i><span>Clipped</span><svg><use href="#mem"/></svg></li>
<li><em></em><i class="sw" style="background:#beb297"></i><span>Clipped</span><svg><use href="#mem"/></svg></li>
<li><em></em><i class="sw" style="background:#e77148"></i><span>Clipped</span><svg><use href="#mem"/></svg></li>
<li><em></em><i class="sw" style="background:#8d5a99"></i><span>Clipped</span><svg><use href="#mem"/></svg></li>
<li><em></em><i class="sw" style="background:#729b6f"></i><span>Clipped</span><svg><use href="#mem"/></svg></li>
<li><em></em><i class="sw" style="background:#8d5a99"></i><span>Clipped</span><svg><use href="#mem"/></svg></li>
<li><em></em><i class="sw" style="background:#e8718d"></i><span>Clipped</span><svg><use href="#mem"/></svg></li>
<li><em></em><i class="sw" style="background:#becf50"></i><span>Clipped</span><svg><use href="#mem"/></svg></li>
<li><em></em><i class="sw" style="background:#a47158"></i><span>Clipped</span><svg><use href="#mem"/></svg></li>
<li><em></em><i class="sw" style="background:#85b66f"></i><span>Clipped</span><svg><use href="#mem"/></svg></li>
<li><em></em><i class="sw" style="background:#a47158"></i><span>Clipped</span><svg><use href="#mem"/></svg></li>
<li><em></em><i class="sw" style="background:#f3a6b2"></i><span>Clipped</span><svg><use href="#mem"/></svg></li>
</ul>
<div class="scroll"><i class="up"></i><i class="thumb"></i><i class="track"></i></div>
</div>
</section>
</aside>
<div class="vsplit"><i></i></div>
<div class="map">
<svg viewBox="319 122 1467 913" width="1467" height="913">
<path class="land" d="M319 100H1657.500V1040H319V579.600L339 563.100 352 558.500 371.700 536.700 388.700 527.100 408.700 504.200 441 494.200 466.700 496.900 481.700 493.100 496.700 483.900 518 482 525 476.200 529 475.800 520.300 464.800 494 465.500 465.300 475.100 445.300 467.400 437.700 455.200 435 441 443.700 406.200 441 371.400 446 361.800 460 346.100 472.700 344.600 479.300 335.400 495.700 303 502 279.600 514 264.600 518.700 236.700 508.700 215.600V187.300L502.700 181.200V161.700L518.300 143 525 138 536.700 131.500 532 118H455L453 123.400 422 151 392 167 370.700 175.500 342 179 331 189 328.300 200.700 316 206z"/>
<path class="edge" d="M523.700 139.100L593 141.400 638 143.700 730 147.900 780 149M315 681.300L780 701.600"/>
<g class="spots"><circle cx="513" cy="172" r="3.900"/><circle cx="455" cy="377" r="3.900"/><circle cx="454" cy="397" r="3.900"/><circle cx="530" cy="435" r="3.900"/><circle cx="641" cy="487" r="3.900"/><circle cx="497" cy="489" r="3.900"/><circle cx="445" cy="503" r="3.900"/><circle cx="415" cy="517" r="3.900"/></g>
</svg>
</div>
</main>
</div>

<div class="dialog">
<header class="dtitle"><svg class="logo"><use href="#qgis"/></svg><span>Buffer</span><svg class="x" viewBox="0 0 12 12"><path d="M1 1l10 10M11 1L1 11" stroke="#777" stroke-width="1"/></svg></header>
<div class="dbody">
<div class="tabs">
<div class="tabbar"><span class="tab cur">Parameters</span><span class="tab">Log</span></div>
<div class="form">
<label>Input layer</label>
<div class="row inrow"><div class="combo tall"><svg><use href="#line"/></svg><span>BristolBayRiver [EPSG:2964]</span><i></i></div><svg class="it"><use href="#iter"/></svg><svg class="wr"><use href="#wrench"/></svg><div class="dots short"><span>…</span><i></i></div></div>
<div class="chk off"><em></em><span>Selected features only</span></div>
<label>Distance</label>
<div class="row"><div class="field dist"><span>100.000000</span><svg><use href="#clear"/></svg><div class="spin"><i></i><i></i></div></div><div class="combo unit"><span>kilometers</span><i></i></div><svg class="dd"><use href="#datadef"/></svg></div>
<label class="seg">Segments</label>
<div class="field"><span>5</span><div class="spin"><i></i><i></i></div></div>
<label class="cap">End cap style</label>
<div class="combo"><span>Round</span><i></i></div>
<label class="join">Join style</label>
<div class="combo"><span>Round</span><i></i></div>
<label class="miter">Miter limit</label>
<div class="field"><span>2.000000</span><div class="spin"><i></i><i></i></div></div>
<div class="chk dis"><em></em><span>Dissolve result</span></div>
<label class="buf">Buffered</label>
<div class="row out"><div class="field ph"><span>[Create temporary layer]</span></div><div class="dots"><span>…</span><i></i></div></div>
<div class="chk opn"><em><svg><use href="#check"/></svg></em><span>Open output file after running algorithm</span></div>
</div>
</div>
<div class="dsplit"><i class="fold"></i><i class="dotcol"></i></div>
<article class="helpbox">
<h1>Buffer</h1>
<p>This algorithm computes a buffer area for all the<br>features in an input layer, using a fixed or dynamic<br>distance.</p>
<p>The segments parameter controls the number of line<br>segments to use to approximate a quarter circle when<br>creating rounded offsets.</p>
<p>The end cap style parameter controls how line endings<br>are handled in the buffer.</p>
<p>The join style parameter specifies whether round, miter<br>or beveled joins should be used when offsetting<br>corners in a line.</p>
<p>The miter limit parameter is only applicable for miter<br>join styles, and controls the maximum distance from the<br>offset curve to use when creating a mitered join.</p>
</article>
</div>
<div class="prog"><div class="bar"><span>0%</span></div><div class="btn gone"><span>Cancel</span></div></div>
<div class="acts"><div class="btn batch"><span>Run as Batch Process…</span></div><div class="btn"><span>Run</span></div><div class="btn"><span>Close</span></div><div class="btn"><span>Help</span></div></div>
</div>
</body>
</html>
```
FILE: styles.css
```css
* { box-sizing: border-box; }
body { margin: 0; width: 1786px; height: 1035px; overflow: hidden; position: relative; font: 12px/16px "Open Sans", "Noto Sans", sans-serif; color: #111; background: #efefef; }
.defs { position: absolute; width: 0; height: 0; }
svg { display: block; flex: none; }
symbol text { font-family: "Open Sans", sans-serif; }
.serif { font-family: "Liberation Serif", serif; }
.tagtx { font: bold 8px "Open Sans", sans-serif; letter-spacing: -.1px; }

.app { display: flex; flex-direction: column; height: 1035px; }
.titlebar { height: 23px; background: #fff; display: flex; align-items: center; gap: 5px; padding-left: 2px; color: #8c8c8c; letter-spacing: -.28px; }
.logo { width: 16px; height: 16px; }
.menubar { height: 20px; padding-left: 11px; border-bottom: 1px solid #d0d0d0; display: grid; grid-template-columns: 52px 35px 40px 43px 57px 54px 48px 47px 63px 39px 44px 72px 60px; align-items: center; color: #969696; letter-spacing: -.4px; white-space: nowrap; }
.menubar u { text-underline-offset: 2px; }

.toolbar { height: 39px; display: flex; align-items: center; border-bottom: 1px solid #b0b0b0; background: linear-gradient(#f9f9f9, #ededed); }
.toolbar.second { height: 40px; border-bottom: 2px solid #b2b2b2; background: linear-gradient(#fafafa, #e9e9e9); }
.toolbar b { width: 33px; height: 32px; display: flex; align-items: center; justify-content: center; flex: none; position: relative; }
.toolbar svg { width: 24px; height: 24px; }
.toolbar .on { background: #dcdcdc; border: 1px solid #b4b4b4; border-radius: 3px; width: 32px; margin-right: 1px; height: 31px; }
.corner::after { content: ""; position: absolute; right: 3px; bottom: 2px; border: 3px solid transparent; border-top: 4px solid #a0a0a0; border-bottom: 0; }
.grip { flex: none; width: 16px; height: 20px; background: radial-gradient(circle, #b4b4b4 .6px, transparent .9px) 8px 0 / 3px 3px; background-clip: content-box; padding: 0 3px 0 8px; }
.grip.first { width: 12px; padding: 0 4px 0 4px; background-position: 4px 0; }
.grip.tight { width: 15px; }
.drop { flex: none; width: 12px; display: flex; justify-content: center; }
.drop::before, .combo > i::before { content: ""; border: 4px solid transparent; border-top: 4px solid #555; border-bottom: 0; }
.drop.dim::before { border-top-color: #a5a5a5; }
.sep { width: 8px; height: 20px; flex: none; background: linear-gradient(#ccc, #ccc) 4px 0 / 1px 100% no-repeat; }
.sep.slim { width: 7px; }

.work { flex: 1; display: flex; min-height: 0; }
.docks { width: 311px; display: flex; flex-direction: column; height: 913px; flex: none; }
.dockhead { margin: 0; font-size: 12px; font-weight: 400; height: 18px; display: flex; align-items: center; padding: 0 1px 0 4px; letter-spacing: -.3px; }
.dockhead span { flex: 1; }
.dockhead svg { width: 12px; height: 12px; margin-left: 2px; }
.docktools { height: 31px; padding: 0 0 1px 8px; display: flex; align-items: center; gap: 9px; }
.docktools svg { width: 16px; height: 16px; }
.docktools .ex { margin-right: -8px; }
.docktools .drop { width: 10px; margin-right: 1px; }
.browser { height: 362px; }
.browser .box { height: 313px; }
.layers { height: 543px; overflow: hidden; }
.layers .box { height: 494px; }
.box { display: flex; background: #fff; border: 1px solid #b4b4b4; overflow: hidden; }
.box ul { flex: 1; margin: 0; padding: 0; list-style: none; }
.tree { padding-top: 1px !important; letter-spacing: -.34px; }
.tree li { height: 22px; display: flex; align-items: center; white-space: nowrap; }
.tree i { width: 20px; display: flex; justify-content: center; padding-right: 4px; }
.tree svg { width: 20px; height: 20px; margin-right: 6px; }
.tree .small { width: 16px; height: 16px; margin-right: 7px; }
.tree .mid { width: 18px; height: 18px; margin-right: 7px; }
.tree .d1 { padding-left: 17px; }
.tree .d1 svg { margin-left: 3px; }
.tree .d2 { padding-left: 34px; }
.tree .d2 svg { margin-left: 1px; margin-right: 7px; }
.tree .d3 { padding-left: 51px; }
.shut::before { content: ""; border: 4px solid transparent; border-left: 4px solid #555; border-right: 0; }
.openn::before { content: ""; border: 4px solid transparent; border-top: 4px solid #555; border-bottom: 0; }
.scroll { width: 14px; border-left: 1px solid #b4b4b4; display: flex; flex-direction: column; }
.scroll i { display: flex; align-items: center; justify-content: center; }
.up, .down { height: 14px; background: #f8f8f8; }
.up { border-bottom: 1px solid #c0c0c0; }
.down { border-top: 1px solid #c0c0c0; }
.up::before { content: ""; border: 4px solid transparent; border-bottom: 4px solid #555; border-top: 0; }
.down::before { content: ""; border: 4px solid transparent; border-top: 4px solid #555; border-bottom: 0; }
.thumb { height: 109px; background: linear-gradient(90deg, #fdfdfd, #f0f0f0); border-bottom: 1px solid #b4b4b4; }
.layers .thumb { height: 316px; }
.track { flex: 1; background: #e3e3e3; }
.hsplit { height: 8px; display: flex; justify-content: center; align-items: center; padding-left: 3px; }
.hsplit i { width: 17px; height: 1px; background: repeating-linear-gradient(90deg, #aaa 0 1px, transparent 1px 3px); }
.vsplit { width: 8px; border-right: 1px solid #b4b4b4; display: flex; align-items: center; justify-content: center; }
.vsplit i { width: 1px; height: 17px; background: repeating-linear-gradient(#aaa 0 1px, transparent 1px 3px); }

.list li { height: 21px; display: flex; align-items: center; padding-left: 28px; padding-right: 8px; font-weight: 700; font-style: italic; color: #808080; letter-spacing: .1px; }
.list span { flex: 1; margin-left: 6px; white-space: nowrap; padding-top: 1px; }
.list li > svg { width: 18px; height: 18px; }
.list em, .chk em { width: 14px; height: 14px; border: 1px solid #b6b6b6; background: #fff; flex: none; display: flex; align-items: center; justify-content: center; }
.list em svg, .chk em svg { width: 14px; height: 14px; }
.list .vis { height: 22px; font-style: normal; color: #000; letter-spacing: -.55px; }
.sw { width: 19px; height: 19px; border: 1px solid rgba(35, 35, 35, .75); margin-left: 6px; }
.ln { width: 19px; height: 4px; margin-left: 6px; }
.ln.thin { height: 2px; }
.pt { width: 9px; height: 9px; border-radius: 50%; background: #91522d; border: 1px solid #4a2a18; margin: 0 6px 0 11px; }

.map { flex: 1; background: #fff; overflow: hidden; }
.land { fill: #ff9e17; stroke: #3a2a14; stroke-width: 1; }
.edge { fill: none; stroke: #3a2204; stroke-width: 1; }
.spots { fill: #91522d; stroke: #4a2412; stroke-width: 1; }

.dialog { position: absolute; left: 772px; top: 124px; width: 1014px; height: 911px; background: #efefef; font: 11px/14px "DejaVu Sans Condensed", "DejaVu Sans", sans-serif; font-stretch: condensed; box-shadow: 0 0 0 1px rgba(70, 50, 20, .35), 0 0 12px rgba(0, 0, 0, .38); display: flex; flex-direction: column; color: #111; letter-spacing: -.51px; }
.dtitle { height: 30px; background: #fff; display: flex; align-items: center; gap: 5px; padding: 0 0 1px 8px; font: 12px/16px "Open Sans", sans-serif; letter-spacing: -.25px; color: #909090; }
.dtitle span { padding-top: 1px; }
.dtitle .x { width: 12px; height: 12px; margin: 0 -2px 0 auto; }
.dbody { height: 802px; padding: 13px 2px 0 13px; display: flex; flex: none; align-items: flex-start; }
.tabs { width: 727px; height: 788px; display: flex; flex-direction: column; }
.tabbar { display: flex; align-items: flex-end; height: 23px; margin-bottom: -1px; position: relative; }
.tab { height: 21px; margin-bottom: 1px; width: 40px; padding-top: 3px; border: 1px solid #b4b4b4; border-bottom: 0; border-left: 0; border-radius: 0 2px 0 0; background: #e8e8e8; display: flex; align-items: center; justify-content: center; }
.tab.cur { height: 23px; margin-bottom: 0; width: 74px; padding-top: 2px; border: 1px solid #b0b0b0; border-bottom: 0; background: #fbfbfb; border-radius: 2px 2px 0 0; }
.form { flex: 1; border: 1px solid #aaa; padding: 4px 5px 0; display: flex; flex-direction: column; }
.form label { height: 14px; line-height: 16px; flex: none; }
.row { display: flex; align-items: flex-start; }
.combo, .field, .dots, .btn, .bar { height: 24px; border: 1px solid #a8a8a8; border-radius: 3px; display: flex; align-items: center; padding-left: 4px; white-space: nowrap; flex: none; }
.combo, .dots, .btn { background: linear-gradient(#fdfdfd, #ebebeb); }
.combo span, .field > span { flex: 1; }
.combo span, .field > span, .btn span, .bar span, .chk span { padding-top: 2px; }
.combo > i { margin-right: 7px; display: flex; }
.field, .bar { background: #fff; }
.tall { height: 28px; width: 611px; }
.tall svg { width: 20px; height: 20px; margin-right: 4px; }
.it { width: 26px; height: 24px; margin: 2px 0 0 9px; }
.wr { width: 26px; height: 26px; margin: 1px 0 0 12px; }
.dots { width: 22px; margin-left: 9px; padding: 0; position: relative; justify-content: center; height: 26px; }
.dots span { padding-top: 2px; }
.dots.short { height: 19px; }
.dots i { position: absolute; right: 2px; bottom: 3px; border: 3px solid transparent; border-top: 3px solid #444; border-bottom: 0; }
.chk { display: flex; align-items: center; gap: 5px; height: 14px; flex: none; }
.chk.off { margin: 8px 0 9px; color: #858585; }
.off em { background: #efefef; border-color: #c0c0c0; }
.form label + .row, .form label + .field { margin-top: 7px; }
.form label + .inrow { margin-top: 6px; height: 28px; }
.dist { width: 574px; }
.dist > svg { width: 17px; height: 14px; margin-right: 12px; }
.spin { width: 14px; align-self: stretch; border-left: 1px solid #b4b4b4; display: flex; flex-direction: column; align-items: center; justify-content: center; gap: 5px; }
.spin i { border: 4px solid transparent; border-bottom: 4px solid #555; border-top: 0; }
.spin i + i { border-bottom: 0; border-top: 4px solid #555; }
.unit { width: 91px; margin-left: 11px; }
.dd { width: 25px; height: 19px; margin: 3px 0 0 10px; }
.form .seg { margin-top: 9px; }
.form .seg + .field { margin-top: 6px; }
.form .cap { margin-top: 8px; }
.form .cap + .combo, .form .join + .combo { margin-top: 5px; }
.form .join { margin-top: 7px; }
.form .miter { margin-top: 7px; }
.form .miter + .field { margin-top: 6px; }
.chk.dis { margin: 10px 0 9px; }
.form .buf + .out { margin-top: 5px; }
.ph { width: 686px; height: 26px; color: #868686; padding-left: 2px; }
.out .dots { margin-left: 7px; }
.chk.opn { margin-top: 9px; }
.dsplit { width: 16px; height: 789px; display: flex; flex-direction: column; align-items: center; justify-content: space-between; }
.fold { border: 5px solid transparent; border-right: 4px solid #444; border-left: 0; margin: 1px 5px 0 0; }
.dotcol { width: 1px; height: 17px; margin: 0 0 384px 1px; background: repeating-linear-gradient(#aaa 0 1px, transparent 1px 3px); }
.helpbox { width: 256px; height: 789px; background: #fff; border: 1px solid #b4b4b4; padding: 4px 3px; color: #606060; line-height: 12px; white-space: nowrap; letter-spacing: -.59px; }
.helpbox h1 { margin: 0 0 11px; font-size: 16px; line-height: 19px; color: #555; letter-spacing: -.4px; }
.helpbox p { margin: 0 0 9.5px; }
.prog { display: flex; margin: 26px 2px 0 13px; gap: 7px; height: 20px; }
.bar { width: 912px; height: 20px; justify-content: center; padding: 0; }
.btn { width: 80px; height: 20px; justify-content: center; padding: 0; }
.gone { color: #8a8a8a; border-color: #c2c2c2; }
.acts { display: flex; margin: 7px 2px 0 13px; gap: 7px; }
.batch { width: 111px; margin-right: auto; }
```
